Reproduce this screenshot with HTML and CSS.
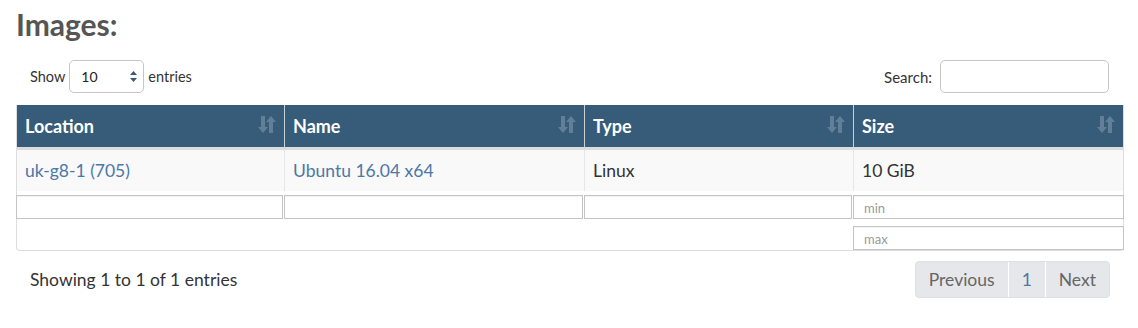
FILE: index.html
```html
<!DOCTYPE html>
<html lang="en">
<head>
  <meta charset="UTF-8" />
  <title>Images</title>
  <link rel="stylesheet" href="styles.css">
</head>
<body>
  <h1 class="page-title">Images:</h1>

  <div class="table-tools">
    <label class="length">Show
      <span class="select-box">10
        <svg class="select-arrows" width="7" height="11" viewBox="0 0 7 11"><path d="M3.5 0 L7 4 H0 Z M3.5 11 L0 7 H7 Z" fill="#3b5a76"/></svg>
      </span>
      entries</label>
    <label class="search">Search: <span class="search-input"></span></label>
  </div>

  <div class="grid-wrap">
    <table class="grid">
      <colgroup>
        <col style="width:267px">
        <col style="width:300px">
        <col style="width:269px">
        <col>
      </colgroup>
      <thead>
        <tr>
          <th>Location <svg class="sort" width="18" height="17" viewBox="0 0 18 17"><path d="M3 0 h4 v11 h3 l-5 6 l-5 -6 h3 Z" /><path d="M11 17 h4 v-11 h3 l-5 -6 l-5 6 h3 Z" /></svg></th>
          <th>Name <svg class="sort" width="18" height="17" viewBox="0 0 18 17"><path d="M3 0 h4 v11 h3 l-5 6 l-5 -6 h3 Z" /><path d="M11 17 h4 v-11 h3 l-5 -6 l-5 6 h3 Z" /></svg></th>
          <th>Type <svg class="sort" width="18" height="17" viewBox="0 0 18 17"><path d="M3 0 h4 v11 h3 l-5 6 l-5 -6 h3 Z" /><path d="M11 17 h4 v-11 h3 l-5 -6 l-5 6 h3 Z" /></svg></th>
          <th>Size <svg class="sort" width="18" height="17" viewBox="0 0 18 17"><path d="M3 0 h4 v11 h3 l-5 6 l-5 -6 h3 Z" /><path d="M11 17 h4 v-11 h3 l-5 -6 l-5 6 h3 Z" /></svg></th>
        </tr>
      </thead>
      <tbody>
        <tr>
          <td><a href="#">uk-g8-1 (705)</a></td>
          <td><a href="#">Ubuntu 16.04 x64</a></td>
          <td>Linux</td>
          <td>10 GiB</td>
        </tr>
      </tbody>
      <tfoot>
        <tr class="filter-row">
          <td><span class="filter"></span></td>
          <td><span class="filter"></span></td>
          <td><span class="filter"></span></td>
          <td><span class="filter">min</span></td>
        </tr>
        <tr class="filter-row second">
          <td></td>
          <td></td>
          <td></td>
          <td><span class="filter">max</span></td>
        </tr>
      </tfoot>
    </table>
  </div>

  <div class="table-footer">
    <div class="info">Showing 1 to 1 of 1 entries</div>
    <div class="pager">
      <span class="page disabled">Previous</span>
      <span class="page current">1</span>
      <span class="page disabled">Next</span>
    </div>
  </div>
</body>
</html>
```

FILE: styles.css
```css
body {
  margin: 0;
  padding: 0 14px 0 16px;
  font-family: Lato, "Open Sans", sans-serif;
  color: #333;
  background: #fff;
}
.page-title {
  margin: 0;
  padding-top: 6px;
  font-size: 30px;
  font-weight: 700;
  line-height: 36px;
  color: #555;
}

/* Show / Search */
.table-tools {
  display: flex;
  justify-content: space-between;
  align-items: center;
  margin-top: 18px;
  height: 33px;
  font-size: 14.5px;
}
.length {
  display: flex;
  align-items: center;
  gap: 4px;
  padding-left: 14px;
}
.select-box {
  display: flex;
  align-items: center;
  justify-content: space-between;
  box-sizing: border-box;
  width: 75px;
  height: 33px;
  padding: 0 6px 0 11px;
  border: 1px solid #c6c6c6;
  border-radius: 5px;
  color: #222;
  font-size: 14px;
}
.search {
  display: flex;
  align-items: center;
  gap: 8px;
  padding-right: 15px;
  font-size: 15px;
}
.search-input {
  display: block;
  box-sizing: border-box;
  width: 169px;
  height: 33px;
  border: 1px solid #c6c6c6;
  border-radius: 5px;
}

/* Table */
.grid-wrap {
  margin-top: 12px;
  border: 1px solid #ddd;
  border-top: none;
  border-radius: 0 0 4px 4px;
  width: 1108px;
  box-sizing: border-box;
}
.grid {
  width: 100%;
  border-collapse: separate;
  border-spacing: 0;
  table-layout: fixed;
  font-size: 17.5px;
}
.grid th {
  position: relative;
  height: 45px;
  padding: 0 8px;
  background: #365c7a;
  color: #fff;
  font-weight: 700;
  font-size: 18px;
  text-align: left;
  border-left: 1px solid #c9d1d8;
  border-bottom: 3px solid #dcdcdc;
  box-sizing: border-box;
}
.grid th:first-child {
  border-left: none;
}
.grid th .sort {
  position: absolute;
  right: 8px;
  top: 11px;
  fill: rgba(255, 255, 255, 0.22);
}
.grid tbody td {
  height: 41px;
  padding: 0 8px;
  background: #f9f9f9;
  border-left: 1px solid #e6e6e6;
  box-sizing: border-box;
}
.grid tbody td:first-child {
  border-left: none;
}
.grid a {
  color: #4c78a6;
  text-decoration: none;
}
.filter-row td {
  padding: 4px 0 0;
}
.filter-row.second td {
  padding: 7px 0 0;
}
.filter {
  display: block;
  box-sizing: border-box;
  height: 24px;
  margin-right: 1px;
  padding: 0 10px;
  border: 1px solid #c4c4c4;
  box-shadow: inset 0 1px 1px rgba(0, 0, 0, 0.05);
  font-size: 13px;
  line-height: 24px;
  color: #9a9a9a;
}
.grid td:first-child .filter {
  margin-left: -1px;
}
.grid td:last-child .filter {
  margin-right: -1px;
}

/* Footer */
.table-footer {
  display: flex;
  justify-content: space-between;
  align-items: center;
  margin-top: 10px;
  padding: 0 14px 0 14px;
  width: 1108px;
  box-sizing: border-box;
}
.info {
  font-size: 17.5px;
}
.pager {
  display: flex;
  border-radius: 4px;
  overflow: hidden;
  background: #e5e7ea;
  border: 1px solid #dde0e3;
}
.page {
  display: block;
  height: 35px;
  line-height: 35px;
  padding: 0 13px;
  font-size: 17.5px;
  color: #666;
  border-left: 1px solid #fff;
}
.page:first-child {
  border-left: none;
}
.page.current {
  color: #4c78a6;
}
```
